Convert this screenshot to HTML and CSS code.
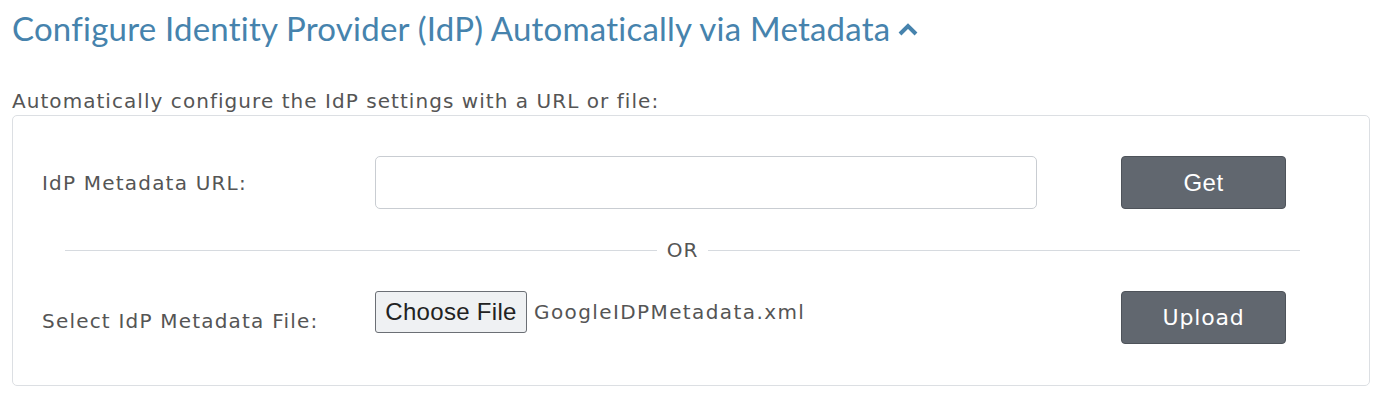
FILE: index.html
```html
<!DOCTYPE html>
<html lang="en">
<head>
<meta charset="utf-8">
<title>Configure IdP</title>
<link rel="stylesheet" href="styles.css">
</head>
<body>
<div class="page">
  <h2 class="title">Configure Identity Provider (IdP) Automatically via Metadata
    <svg class="chev" width="22" height="14" viewBox="0 0 22 14"><path d="M3 12 L11 4 L19 12" fill="none" stroke="#4683ad" stroke-width="4"/></svg>
  </h2>
  <p class="subtitle">Automatically configure the IdP settings with a URL or file:</p>
  <div class="box">
    <div class="row">
      <label class="label">IdP Metadata URL:</label>
      <div class="url-input"></div>
      <div class="spacer"></div>
      <button class="btn btn-get">Get</button>
    </div>
    <div class="divider"><span class="line"></span><span class="or">OR</span><span class="line"></span></div>
    <div class="row row-file">
      <label class="label label-file">Select IdP Metadata File:</label>
      <div class="file">
        <span class="choose">Choose File</span>
        <span class="filename">GoogleIDPMetadata.xml</span>
      </div>
      <div class="spacer"></div>
      <button class="btn btn-upload">Upload</button>
    </div>
  </div>
</div>
</body>
</html>
```
FILE: styles.css
```css
* { box-sizing: border-box; }
body {
  margin: 0;
  background: #fff;
  font-family: "DejaVu Sans", "Open Sans", sans-serif;
  color: #555;
}
.page {
  padding: 0 30px 0 12px;
}
.title {
  margin: 0;
  padding-top: 8px;
  font-family: Lato, "Open Sans", sans-serif;
  font-weight: 400;
  font-size: 33px;
  line-height: 40px;
  letter-spacing: 0.22px;
  color: #4683ad;
  display: flex;
  align-items: center;
  gap: 7px;
}
.chev { margin-top: 2px; }
.subtitle {
  margin: 40px 0 0 0;
  font-size: 20px;
  line-height: 27px;
  letter-spacing: 1.05px;
  color: #555;
}
.box {
  width: 1358px;
  height: 271px;
  border: 1px solid #dcdfe3;
  border-radius: 5px;
  padding: 40px 0 0 29px;
}
.row {
  display: grid;
  grid-template-columns: 333px 662px 84px 165px;
  align-items: center;
  height: 53px;
}
.label {
  font-size: 20px;
  letter-spacing: 1.2px;
  color: #555;
}
.url-input {
  height: 53px;
  border: 1px solid #c9cdd2;
  border-radius: 5px;
  background: #fff;
}
.btn {
  height: 53px;
  border: 1px solid #4e535a;
  border-radius: 4px;
  background: #61676f;
  color: #fff;
  padding: 0;
}
.btn-get {
  font-family: "Liberation Sans", Arial, sans-serif;
  font-size: 24px;
  letter-spacing: 0.5px;
}
.btn-upload {
  font-family: "DejaVu Sans", sans-serif;
  font-size: 22px;
  letter-spacing: 0.8px;
}
.divider {
  display: flex;
  align-items: center;
  margin: 16px 0 0 23px;
  width: 1235px;
  height: 50px;
  gap: 10px;
}
.line {
  flex: 1;
  height: 1px;
  background: #d6dadf;
}
.or {
  font-size: 20px;
  letter-spacing: 1px;
  color: #555;
}
.row-file {
  margin-top: 16px;
  align-items: start;
}
.label-file { align-self: center; padding-top: 6px; }
.file {
  display: flex;
  align-items: center;
  gap: 7px;
}
.choose {
  display: inline-flex;
  align-items: center;
  justify-content: center;
  width: 152px;
  height: 42px;
  background: #eff1f3;
  border: 1px solid #6b6f75;
  border-radius: 3px;
  font-family: "Liberation Sans", Arial, sans-serif;
  font-size: 24px;
  letter-spacing: 0.3px;
  color: #222;
}
.filename {
  font-size: 20px;
  letter-spacing: 1.4px;
  color: #555;
}
```
